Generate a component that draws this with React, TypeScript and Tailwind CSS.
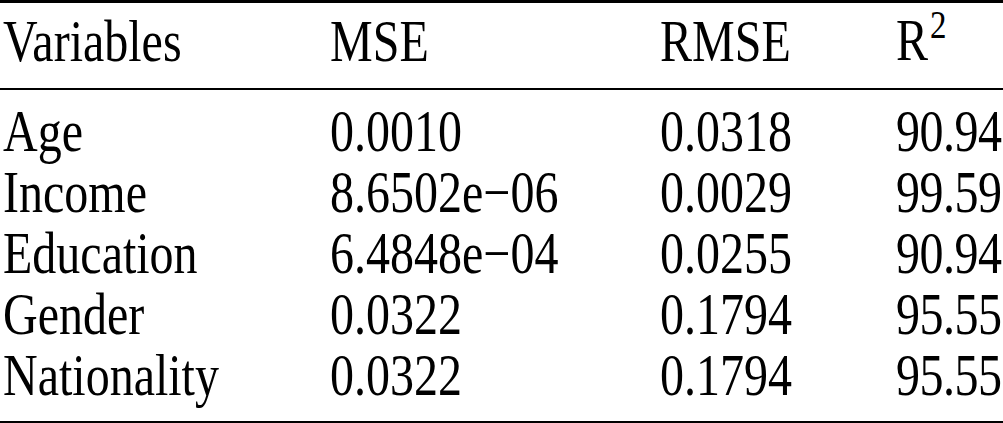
import React from "react";

const rows = [
  ["Age", "0.0010", "0.0318", "90.94"],
  ["Income", "8.6502e\u221206", "0.0029", "99.59"],
  ["Education", "6.4848e\u221204", "0.0255", "90.94"],
  ["Gender", "0.0322", "0.1794", "95.55"],
  ["Nationality", "0.0322", "0.1794", "95.55"],
];

function T({ children }: { children: React.ReactNode }) {
  return <span className="inline-block origin-[center_70%] scale-y-[1.22]">{children}</span>;
}

export default function App() {
  return (
    <div
      className="w-[1003px] h-[423px] bg-white text-black overflow-hidden"
      style={{ fontFamily: '"Liberation Serif", "Times New Roman", serif' }}
    >
      <div className="border-t-[3px] border-b-2 border-black text-[48px] leading-[83px] h-[90px] grid grid-cols-[327px_330px_236px_1fr] pl-[3px]">
        <div><T>Variables</T></div>
        <div><T>MSE</T></div>
        <div><T>RMSE</T></div>
        <div>
          <T>
            R<span className="relative -top-[18px] ml-[2px] text-[33px]">2</span>
          </T>
        </div>
      </div>
      <div className="pt-[13px] pb-[13px] border-b-2 border-black text-[48px] leading-[61px]">
        {rows.map((r) => (
          <div key={r[0]} className="grid grid-cols-[327px_330px_236px_1fr] pl-[3px]">
            <div><T>{r[0]}</T></div>
            <div><T>{r[1]}</T></div>
            <div><T>{r[2]}</T></div>
            <div className="tracking-[-0.5px]"><T>{r[3]}</T></div>
          </div>
        ))}
      </div>
    </div>
  );
}
